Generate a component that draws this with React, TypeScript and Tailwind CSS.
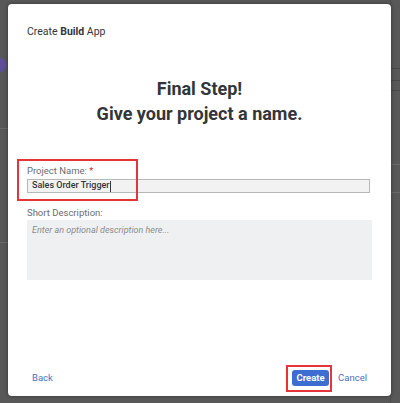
import React from "react";

export default function App() {
  return (
    <div
      className="w-[400px] h-[403px] bg-[#585858] relative overflow-hidden"
      style={{ fontFamily: 'Roboto, "Noto Sans", Arial, sans-serif' }}
    >
      {/* background app hints */}
      <div className="absolute left-0 top-[128px] w-[8px] h-px bg-[#6a6a6a]" />
      <div className="absolute left-0 top-[242px] w-[8px] h-px bg-[#6a6a6a]" />
      <div className="absolute left-[-6px] top-[58px] w-[12px] h-[14px] rounded-full bg-[#5f4f9a]" />
      <div className="absolute right-0 top-[68px] w-[10px] h-px bg-[#4a4a4a]" />
      <div className="absolute right-0 top-[80px] w-[10px] h-px bg-[#4a4a4a]" />
      <div className="absolute right-0 top-[90px] w-[10px] h-px bg-[#4a4a4a]" />
      <div className="absolute right-0 top-[164px] w-[10px] h-px bg-[#6a6a6a]" />
      <div className="absolute right-0 top-[192px] w-[10px] h-px bg-[#6a6a6a]" />
      <div className="absolute right-[9px] top-0 w-px h-[403px] bg-[#4c4c4c]" />

      <div className="pt-[4px] pl-[8px]">
        <div className="relative w-[383px] h-[392px] bg-white rounded-[4px] shadow-[0_0_4px_rgba(0,0,0,0.4)] flex flex-col">
          <div className="pt-[21px] px-[19px] text-[10.5px] leading-[14px] text-[#32363a]">
            Create <span className="font-bold">Build</span> App
          </div>

          <div className="mt-[37px] text-center text-[#32363a] font-bold text-[18px] leading-[25px]">
            <div>Final Step!</div>
            <div>Give your project a name.</div>
          </div>

          <div className="relative mt-[38px] px-[19px]">
            <div className="text-[9.5px] leading-[14px] text-[#6a6d70]">
              Project Name:<span className="text-[#d0332f]"> *</span>
            </div>
            <div className="mt-[1px] mr-[2px] h-[14px] bg-[#f2f2f2] border border-[#b8b8b8] flex items-center px-[4px] text-[9px] font-medium text-[#32363a]">
              Sales Order Trigger
              <span className="inline-block w-px h-[11px] bg-[#32363a]" />
            </div>
            <div className="mt-[13px] text-[9.5px] leading-[14px] text-[#6a6d70]">Short Description:</div>
            <div className="h-[60px] bg-[#eff0f1] px-[5px] pt-[3px] text-[9px] leading-[14px] italic text-[#8a8d90]">
              Enter an optional description here...
            </div>
            <div className="absolute left-[9px] top-[-5px] w-[121px] h-[42px] border-2 border-[#e5343a]" />
          </div>

          <div className="mt-auto pb-[10px] pl-[24px] pr-[24px] flex items-center">
            <span className="text-[9.5px] text-[#4d6fc1]">Back</span>
            <div className="ml-auto flex items-center">
              <div className="relative">
                <div className="h-[16px] w-[37px] justify-center rounded-[3px] bg-[#3d6dd0] text-white text-[9.5px] font-bold flex items-center leading-none">
                  Create
                </div>
                <div className="absolute left-[-6px] top-[-5px] right-[-3px] bottom-[-6px] border-2 border-[#e5343a]" />
              </div>
              <span className="ml-[9px] text-[9.5px] text-[#4d6fc1]">Cancel</span>
            </div>
          </div>
        </div>
      </div>
    </div>
  );
}
